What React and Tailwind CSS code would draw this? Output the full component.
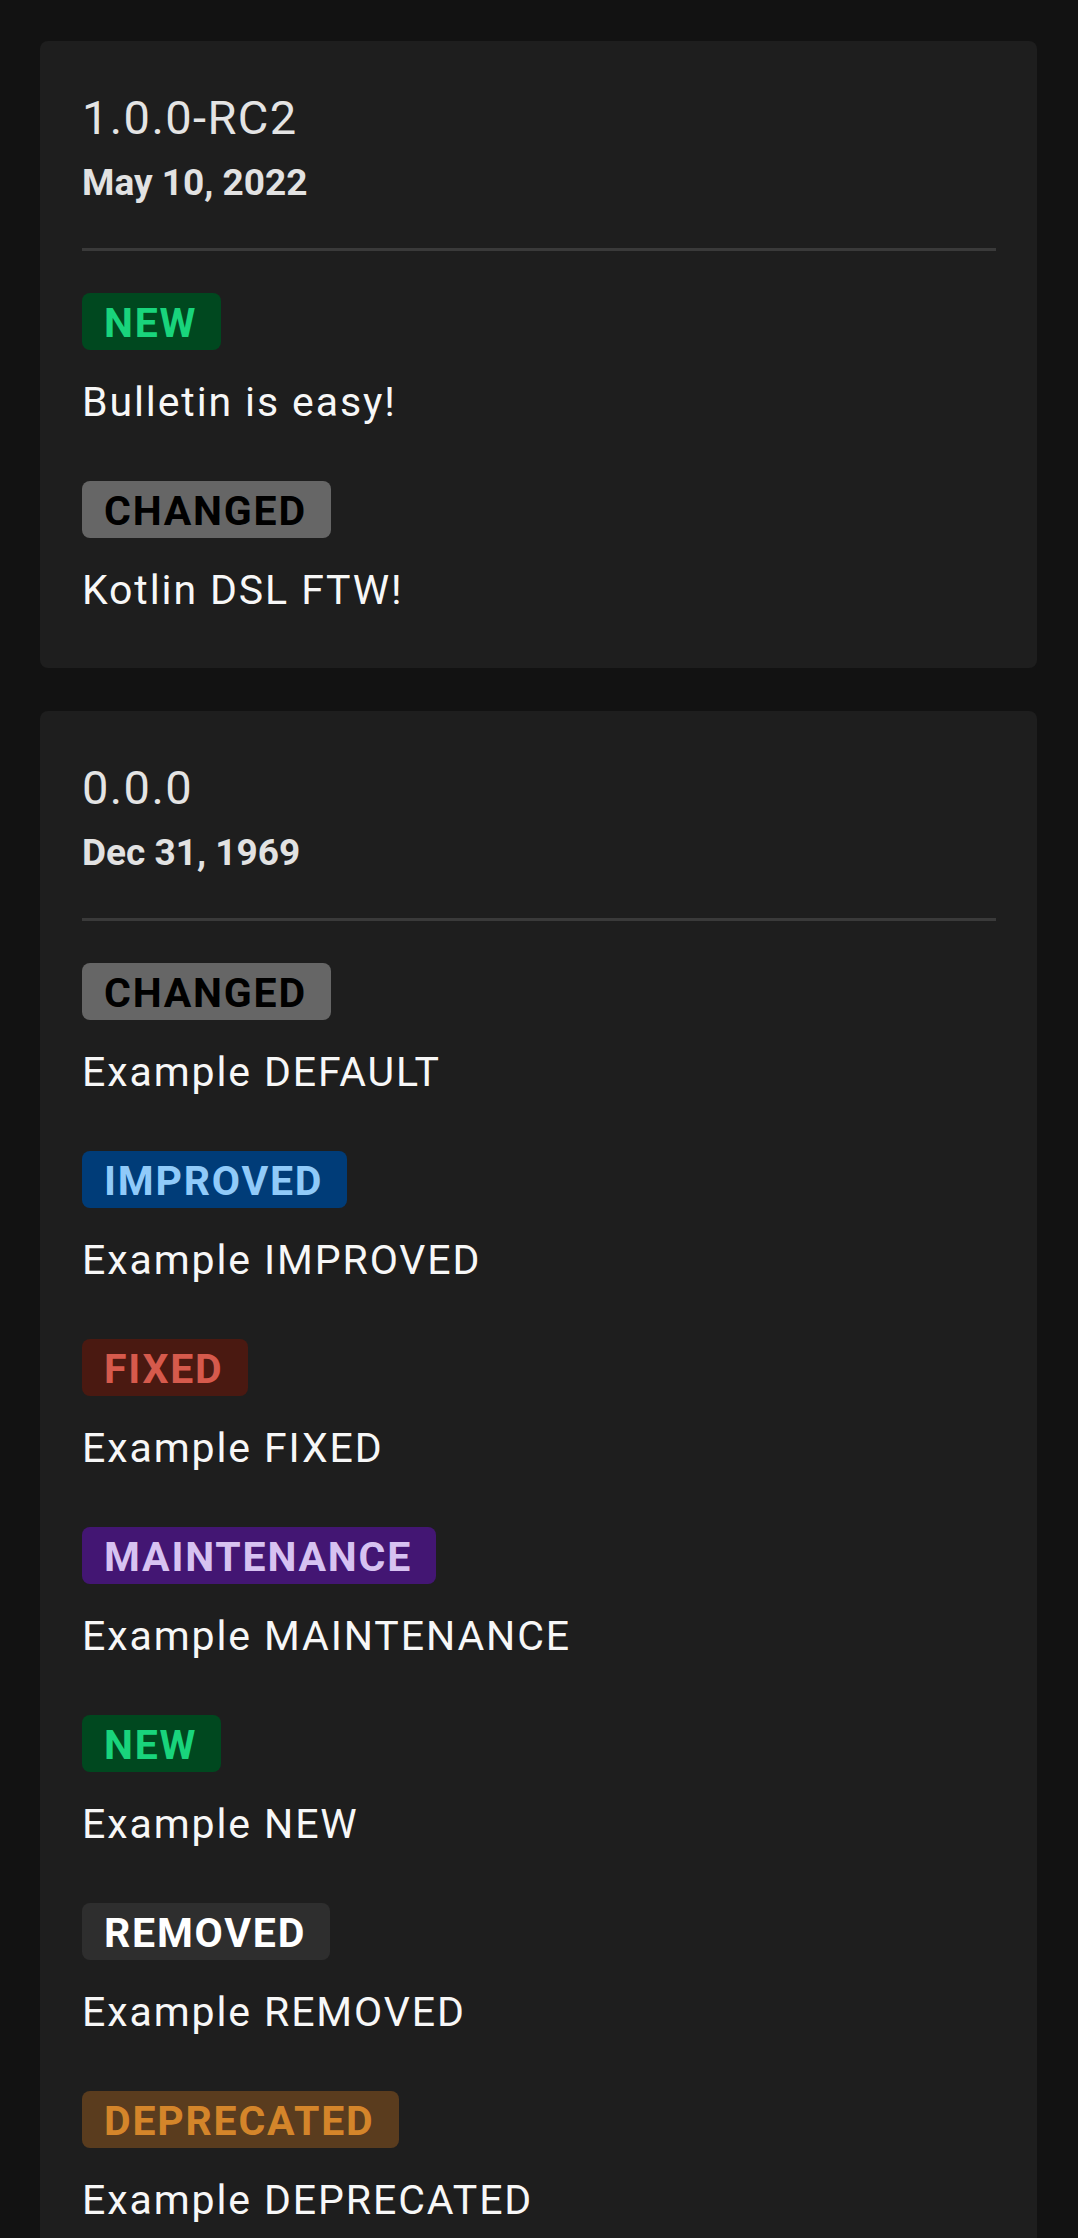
import React from "react"

const badgeStyles = {
    NEW: "bg-[#00481f] text-[#19d47c]",
    CHANGED: "bg-[#666666] text-[#000000]",
    IMPROVED: "bg-[#003c78] text-[#90caf9]",
    FIXED: "bg-[#4a1911] text-[#d65a4c]",
    MAINTENANCE: "bg-[#431673] text-[#d7c2f1]",
    REMOVED: "bg-[#2e2e2e] text-[#ffffff]",
    DEPRECATED: "bg-[#5a3c1e] text-[#d4852a]",
}

const releases = [
    {
        version: "1.0.0-RC2",
        date: "May 10, 2022",
        changes: [
            { type: "NEW", text: "Bulletin is easy!" },
            { type: "CHANGED", text: "Kotlin DSL FTW!" },
        ],
    },
    {
        version: "0.0.0",
        date: "Dec 31, 1969",
        changes: [
            { type: "CHANGED", text: "Example DEFAULT" },
            { type: "IMPROVED", text: "Example IMPROVED" },
            { type: "FIXED", text: "Example FIXED" },
            { type: "MAINTENANCE", text: "Example MAINTENANCE" },
            { type: "NEW", text: "Example NEW" },
            { type: "REMOVED", text: "Example REMOVED" },
            { type: "DEPRECATED", text: "Example DEPRECATED" },
        ],
    },
]

const Badge = ({ type }) => (
    <span
        className={`inline-block h-[57px] rounded-[8px] pl-[22px] pr-[24px] pt-[3px] text-[41px] leading-[54px] font-bold tracking-[1.8px] ${badgeStyles[type]}`}
    >
        {type}
    </span>
)

const ReleaseCard = ({ release }) => (
    <div className="rounded-[8px] bg-[#1e1e1e] pt-[48px] pb-[54px] pl-[42px] pr-[41px]">
        <h2 className="text-[47px] leading-[58px] font-normal tracking-[1.4px] text-[#e4e4e4]">
            {release.version}
        </h2>
        <p className="mt-[14px] text-[37px] leading-[44px] font-bold text-[#e2e2e2]">
            {release.date}
        </p>
        <div className="mt-[43px] h-[3px] bg-[#3a3a3a]" />

        <div className="mt-[42px] flex flex-col gap-[55px]">
            {release.changes.map((change, i) => (
                <div key={i} className="flex flex-col items-start">
                    <Badge type={change.type} />
                    <p className="mt-[28px] text-[41px] leading-[48px] tracking-[1.9px] text-[#f7f7f7]">
                        {change.text}
                    </p>
                </div>
            ))}
        </div>
    </div>
)

const App = () => {
    return (
        <div
            className="min-h-screen bg-[#121212] pt-[41px] pl-[40px] pr-[41px] pb-[40px] flex flex-col gap-[43px]"
            style={{ fontFamily: "Roboto, 'Liberation Sans', sans-serif" }}
        >
            {releases.map((release) => (
                <ReleaseCard key={release.version} release={release} />
            ))}
        </div>
    )
}

export default App
